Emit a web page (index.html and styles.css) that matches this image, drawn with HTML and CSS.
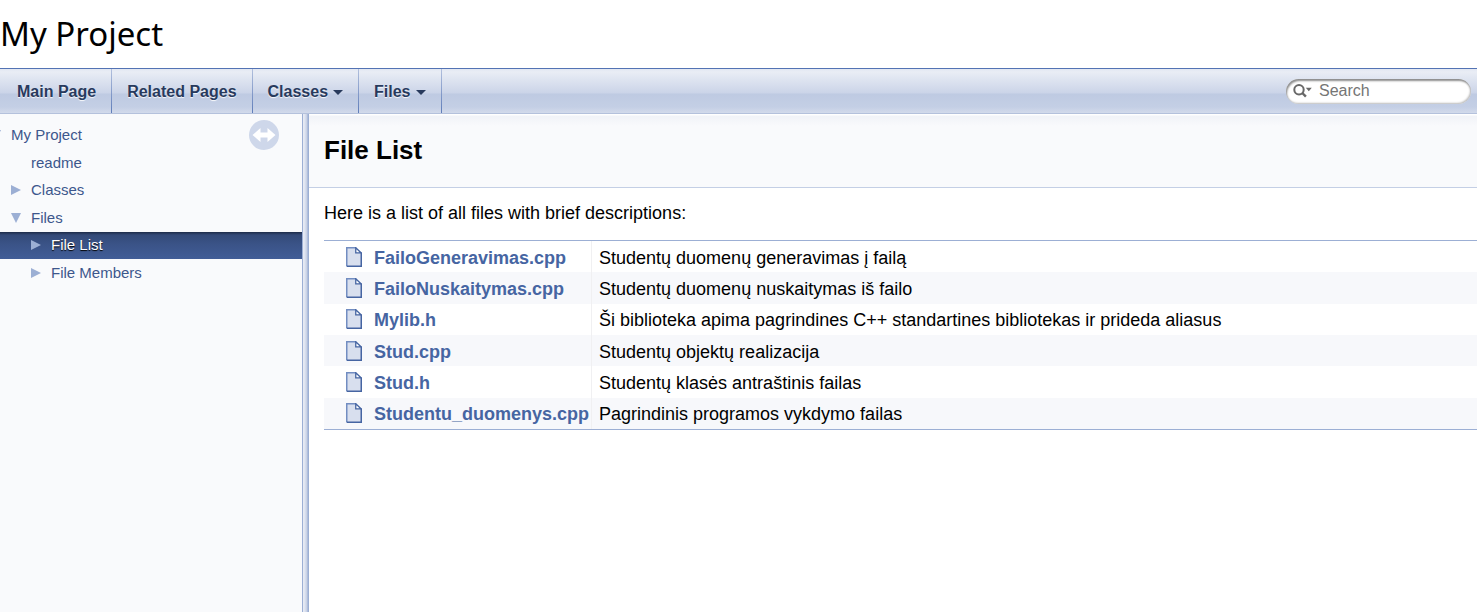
FILE: index.html
```
<!DOCTYPE html>
<html lang="en">
<head>
<meta charset="utf-8">
<title>My Project: File List</title>
<link rel="stylesheet" href="styles.css">
</head>
<body>
<svg class="defs" aria-hidden="true">
  <symbol id="doc" viewBox="0 0 16 20">
    <path d="M.75.75h9.800l4.700 4.700v13.800H.75z" fill="#d8dfee"/>
    <path d="M.75 19.250V.75h9.500" fill="none" stroke="#728dc1" stroke-width="1.5"/>
    <path d="M15.250 5.500v13.750H.75" fill="none" stroke="#4665a2" stroke-width="1.5"/>
    <path d="M9.750.75v5.200h5.500z" fill="#fff" stroke="#4665a2" stroke-width="1.3"/>
  </symbol>
  <symbol id="closed" viewBox="0 0 10 10"><path d="M0 0l10 5-10 5z" fill="#9cafd4"/></symbol>
  <symbol id="open" viewBox="0 0 10 10"><path d="M0 0h10L5 10z" fill="#9cafd4"/></symbol>
</svg>
<header class="title-area">My Project</header>
<nav class="menu">
  <ul class="tabs">
    <li><a href="#main">Main Page</a></li>
    <li><a href="#pages">Related Pages</a></li>
    <li><a href="#classes">Classes<span class="caret"></span></a></li>
    <li><a href="#files">Files<span class="caret"></span></a></li>
  </ul>
  <label class="search">
    <svg class="lens" viewBox="0 0 20 16" aria-hidden="true">
      <circle cx="6" cy="6.8" r="4.700" fill="none" stroke="#686868" stroke-width="2"/>
      <path d="M9.300 10l3.600 3.600" stroke="#686868" stroke-width="2.4"/>
      <path d="M12.800 4.800h6l-3 3.500z" fill="#686868"/>
    </svg>
    <input class="query" type="text" placeholder="Search" aria-label="Search">
  </label>
</nav>
<div class="body">
  <aside class="side">
    <ul class="tree">
      <li class="root"><svg class="arrow"><use href="#open"/></svg><a href="#main">My Project</a></li>
      <li class="leaf"><a href="#readme">readme</a></li>
      <li><svg class="arrow"><use href="#closed"/></svg><a href="#classes">Classes</a></li>
      <li><svg class="arrow"><use href="#open"/></svg><a href="#files">Files</a></li>
      <li class="nested selected"><svg class="arrow"><use href="#closed"/></svg><a href="#list">File List</a></li>
      <li class="nested"><svg class="arrow"><use href="#closed"/></svg><a href="#members">File Members</a></li>
    </ul>
    <button class="sync" type="button" aria-label="Toggle link with contents">
      <svg viewBox="0 0 30 30" aria-hidden="true">
        <circle cx="15" cy="15" r="15" fill="#ced7ea"/>
        <path d="M3.500 15L11.500 8v4.500h7V8l8 7-8 7v-4.500h-7V22z" fill="#fff"/>
      </svg>
    </button>
  </aside>
  <div class="splitter"></div>
  <main class="content">
    <div class="heading"><h1>File List</h1></div>
    <div class="contents">
      <p>Here is a list of all files with brief descriptions:</p>
      <table class="directory">
        <tbody>
        <tr><td class="entry"><svg class="doc"><use href="#doc"/></svg><a href="#f1">FailoGeneravimas.cpp</a></td><td class="desc">Studentų duomenų generavimas į failą</td></tr>
        <tr><td class="entry"><svg class="doc"><use href="#doc"/></svg><a href="#f2">FailoNuskaitymas.cpp</a></td><td class="desc">Studentų duomenų nuskaitymas iš failo</td></tr>
        <tr><td class="entry"><svg class="doc"><use href="#doc"/></svg><a href="#f3">Mylib.h</a></td><td class="desc">Ši biblioteka apima pagrindines C++ standartines bibliotekas ir prideda aliasus</td></tr>
        <tr><td class="entry"><svg class="doc"><use href="#doc"/></svg><a href="#f4">Stud.cpp</a></td><td class="desc">Studentų objektų realizacija</td></tr>
        <tr><td class="entry"><svg class="doc"><use href="#doc"/></svg><a href="#f5">Stud.h</a></td><td class="desc">Studentų klasės antraštinis failas</td></tr>
        <tr><td class="entry"><svg class="doc"><use href="#doc"/></svg><a href="#f6">Studentu_duomenys.cpp</a></td><td class="desc">Pagrindinis programos vykdymo failas</td></tr>
        </tbody>
      </table>
    </div>
  </main>
</div>
</body>
</html>
```
FILE: styles.css
```
* { box-sizing: border-box; }
body {
  margin: 0;
  min-height: 100vh;
  display: flex;
  flex-direction: column;
  overflow-x: hidden;
  background: #fff;
  color: #000;
  font: 18px/22px "Liberation Sans", Arial, sans-serif;
}
a { color: inherit; text-decoration: none; }
ul { list-style: none; margin: 0; padding: 0; }
.defs { display: none; }

.title-area {
  padding: 12px 0;
  font: 33px/44px "Noto Sans", Tahoma, sans-serif;
}

.menu {
  display: flex;
  align-items: center;
  justify-content: space-between;
  border-top: 1px solid #5373b4;
  border-bottom: 1px solid #b4c1dc;
  background: linear-gradient(#e2e7f2 0, #e9edf5 3px, #cbd4e8 24px, #becae2 25px, #c4cfe5 38px, #d2daeb 100%);
}
.tabs { display: flex; }
.tabs li {
  border-right: 1px solid;
  border-image: linear-gradient(#b3c1de, #5d7bb8) 1;
}
.tabs a {
  display: flex;
  align-items: center;
  padding: 2px 15px 0;
  color: #283a5d;
  font-size: 16px;
  font-weight: bold;
  line-height: 42px;
  text-shadow: 0 1px 1px rgba(255, 255, 255, .9);
}
.tabs li:first-child a { padding-left: 17px; }
.caret {
  margin-left: 5px;
  border: 5px solid transparent;
  border-top-color: #283a5d;
  border-bottom: 0;
}
.search {
  display: flex;
  align-items: center;
  width: 185px;
  height: 25px;
  margin-right: 6px;
  padding-left: 7px;
  border-radius: 13px;
  background: #fff;
  box-shadow: inset 1px 2px 2px #8c8c8c, inset -1px -1px 2px #bbb;
}
.lens { flex: none; width: 20px; height: 16px; }
.query {
  min-width: 0;
  flex: 1;
  padding: 0 6px;
  border: 0;
  outline: 0;
  background: none;
  font: 16px/20px "Liberation Sans", Arial, sans-serif;
}
.query::placeholder { color: #757575; opacity: 1; }

.body { display: flex; flex: 1; }
.side {
  position: relative;
  width: 302px;
  flex: none;
  padding-top: 8px;
  background: #f9fafc;
}
.tree { color: #3d578c; font-size: 15px; }
.tree li {
  display: flex;
  align-items: center;
  height: 27px;
  padding: 0 0 1px 11px;
}
.tree li:nth-child(even) { height: 28px; padding-bottom: 0; }
.arrow { flex: none; width: 10px; height: 10px; margin-right: 10px; }
.tree .leaf { padding-left: 31px; }
.tree .nested { padding-left: 31px; }
.tree .root { padding-left: 0; }
.root .arrow { margin-left: -9px; }
.tree .selected {
  color: #fff;
  background: linear-gradient(#1d2b48 0, #344a78 3px, #3a5387 12px, #415d97 100%);
  text-shadow: 0 1px 1px #000;
}
.sync {
  position: absolute;
  top: 6px;
  right: 23px;
  width: 30px;
  height: 30px;
  padding: 0;
  border: 0;
  background: none;
}
.sync svg { display: block; }
.splitter {
  width: 7px;
  flex: none;
  background: linear-gradient(90deg, #9cafd4 0 1px, #e6eaf4 1px 2px, #dce2ef 3px, #c4cee4 5px, #9cafd4 6px 7px);
}

.content { flex: 1; min-width: 0; }
.heading {
  padding: 20px 15px 21px;
  border-bottom: 1px solid #c4cfe5;
  background: linear-gradient(#fff 0, #fff 1px, #f1f3f8 2px, #f9fafc 12px);
}
h1 { margin: 0; font-size: 26px; line-height: 32px; }
.contents { padding-left: 15px; }
p { margin: 0; padding: 14px 0 16px; }
.directory {
  width: 100%;
  height: 190px;
  border-collapse: separate;
  border-spacing: 0;
  border-top: 1px solid #9cafd4;
  border-bottom: 1px solid #9cafd4;
}
.directory tr:nth-child(even) { background: #f7f8fb; }
.directory td { padding: 5px 2px 3px 0; white-space: nowrap; vertical-align: middle; }
.directory .entry { padding-left: 22px; color: #4665a2; font-weight: bold; }
.directory .desc { width: 100%; padding-left: 7px; border-left: 1px solid #f0f0f2; }
.doc { width: 16px; height: 20px; margin-right: 12px; vertical-align: -3px; }
```
